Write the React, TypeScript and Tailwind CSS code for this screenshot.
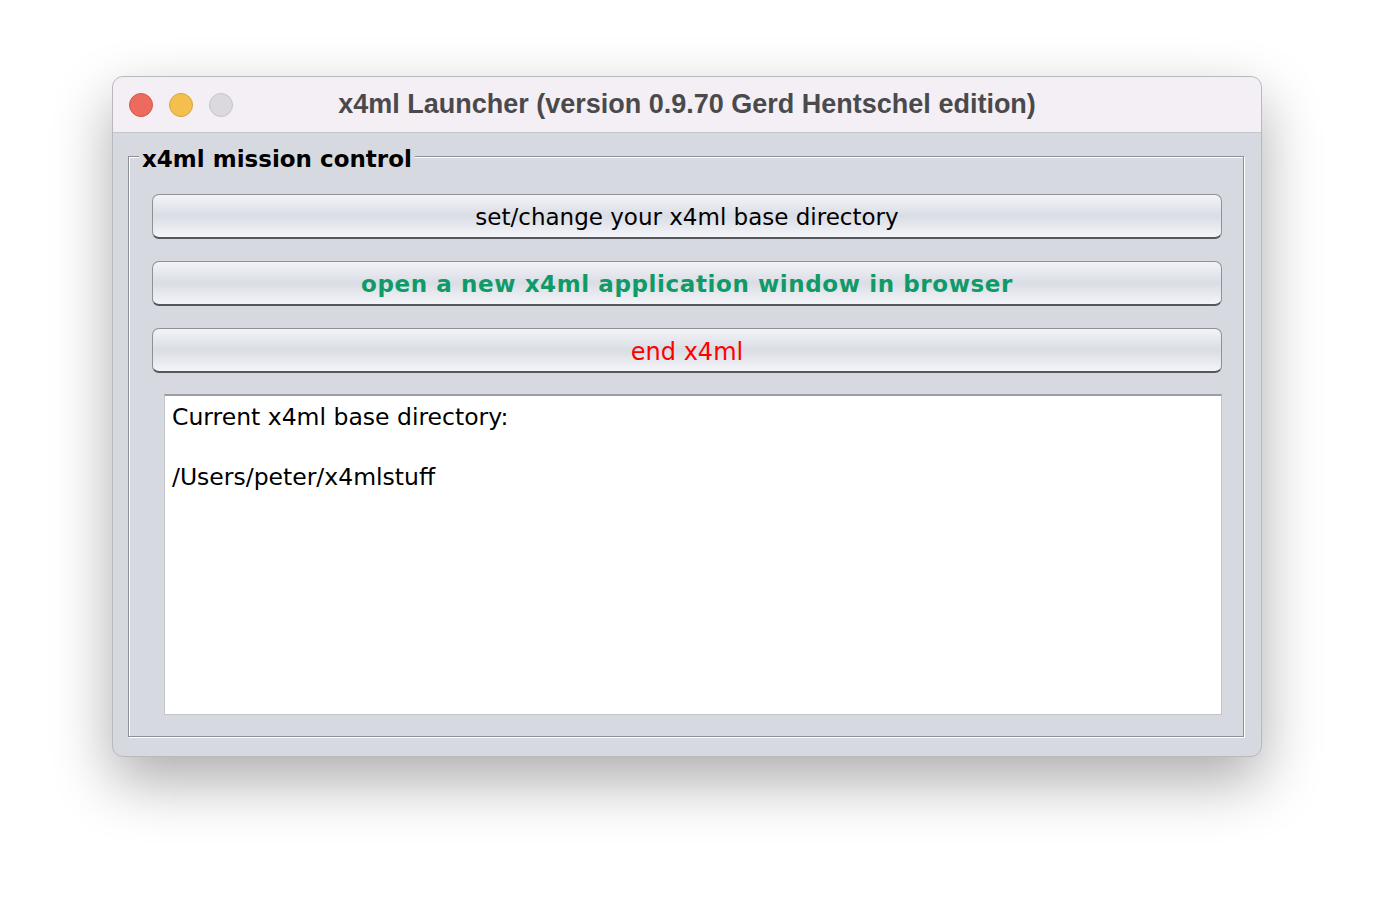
import React from 'react';

const ui = { fontFamily: '"DejaVu Sans", "Noto Sans", sans-serif' };

function Btn({ label, cls }: { label: string; cls: string }) {
  return (
    <div className="h-[45px] pt-[3px] rounded-[7px] border border-[#8f9197] border-b-[#55575c] border-b-2 bg-[linear-gradient(#f2f4f8,#dadde4_50%,#f3f5f9)] flex items-center justify-center">
      <span className={cls} style={ui}>{label}</span>
    </div>
  );
}

export default function App() {
  return (
    <div className="w-[1374px] h-[904px] bg-white relative">
      <div className="absolute left-[112px] top-[76px] w-[1150px] h-[681px] rounded-[11px] border border-[#b9b9bd] bg-[#d7d9e0] overflow-hidden shadow-[0_24px_60px_rgba(0,0,0,0.33)]">
        <div className="h-[56px] bg-[#f3eff5] border-b border-[#c6c5cc] flex items-center relative">
          <div className="flex gap-[16px] pl-[16px]">
            <div className="w-[24px] h-[24px] rounded-full bg-[#ed6a5e] border border-[#d2574c]" />
            <div className="w-[24px] h-[24px] rounded-full bg-[#f5bf4f] border border-[#d9a33b]" />
            <div className="w-[24px] h-[24px] rounded-full bg-[#dcd9de] border border-[#c6c3c9]" />
          </div>
          <div className="absolute inset-0 flex items-center justify-center text-[27px] font-bold text-[#4a4a4c]" style={{ fontFamily: '"Liberation Sans", Arial, sans-serif' }}>
            x4ml Launcher (version 0.9.70 Gerd Hentschel edition)
          </div>
        </div>
        <div className="pl-[15px] pr-[17px] pt-[23px]">
          <div className="relative border border-[#8c8f96] shadow-[1px_1px_0_#fff,inset_1px_1px_0_#fff] h-[581px] pl-[23px] pr-[21px] pt-[37px]">
            <div className="absolute left-[10px] -top-[13px] px-[3px] bg-[#d7d9e0] text-[23px] font-bold text-black leading-[30px]" style={ui}>
              x4ml mission control
            </div>
            <div className="flex flex-col gap-[22px]">
              <Btn label="set/change your x4ml base directory" cls="text-[23px] text-black" />
              <Btn label="open a new x4ml application window in browser" cls="text-[23px] font-bold text-[#0f9a68] tracking-[0.6px]" />
              <Btn label="end x4ml" cls="text-[24px] text-[#ff0000]" />
            </div>
            <div className="mt-[21px] ml-[12px] h-[321px] bg-white border border-[#c3c5cb] border-t-[#9c9ea4] border-t-2 px-[7px] pt-[6px] text-[23.5px] leading-[30px] text-black" style={ui}>
              <div>Current x4ml base directory:</div>
              <div>&nbsp;</div>
              <div>/Users/peter/x4mlstuff</div>
            </div>
          </div>
        </div>
      </div>
    </div>
  );
}
